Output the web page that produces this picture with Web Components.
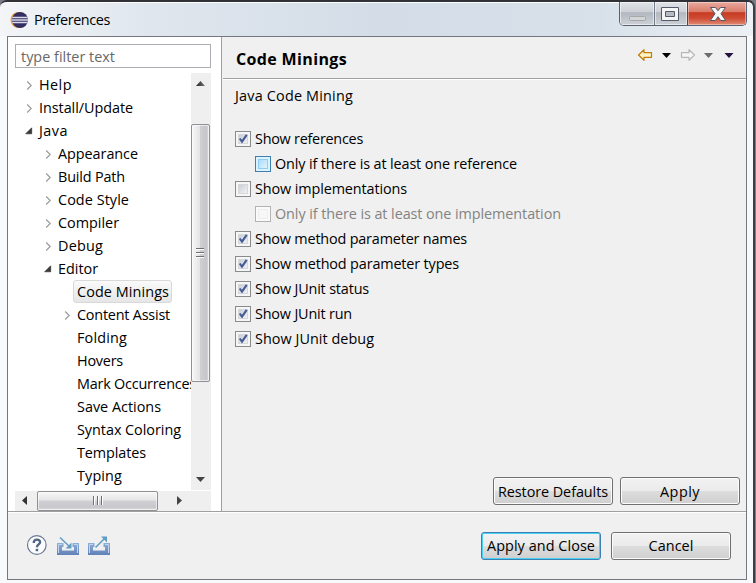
<!DOCTYPE html>
<html lang="en"><head><meta charset="utf-8"><title>Preferences</title>
<style>
html,body{margin:0;width:756px;height:583px;overflow:hidden;background:#777c86;font-family:"Open Sans","Noto Sans",sans-serif;font-size:14.4px;color:#000}
</style></head><body>
<pref-window></pref-window>
<script>
const define=(name,html,init)=>customElements.define(name,class extends HTMLElement{
  constructor(){super();const t=document.createElement('template');t.innerHTML=html;
    this.attachShadow({mode:'open'}).append(t.content.cloneNode(true));}
  connectedCallback(){if(init)init(this,this.shadowRoot);}
});

/* Single-line label; spacing is tuned so the line occupies the width in "w". */
define('fit-label',`<style>:host{display:inline-block;white-space:pre;flex:none;line-height:23px;height:23px}</style><span></span>`,(h,r)=>{
  const s=r.querySelector('span');s.textContent=h.getAttribute('text');
  const w=+h.getAttribute('w');
  if(w){s.style.letterSpacing='0px';const d=w-s.getBoundingClientRect().width;s.style.letterSpacing=(d/s.textContent.length)+'px';}
});

define('tree-item',`<style>
:host{display:flex;height:23px;align-items:center;box-sizing:border-box}
.t{width:16px;height:23px;flex:none}
.b{display:flex;height:21px;align-items:center;border:1px solid transparent;border-radius:3px;padding:0 3px;line-height:21px}
:host([selected]) .b{border-color:#d9d9d9;background:linear-gradient(#fafafa,#e6e6e6);padding-right:2px}
svg{display:block}
</style><svg class="t" viewBox="0 0 16 23"><path/></svg><div class="b"><fit-label></fit-label></div>`,(h,r)=>{
  h.style.paddingLeft=(4+19*h.getAttribute('level')) +'px';
  const p=r.querySelector('path'),s=h.getAttribute('state');
  if(s==='closed'){p.setAttribute('d','M8.2 8.5l4 4-4 4');p.setAttribute('fill','none');p.setAttribute('stroke','#989898');p.setAttribute('stroke-width','1.1');}
  if(s==='open'){p.setAttribute('d','M12.7 8.8v6H6.700z');p.setAttribute('fill','#3b3b3b');p.setAttribute('stroke','#222');p.setAttribute('stroke-width','.6');}
  const l=document.createElement('fit-label');l.setAttribute('text',h.getAttribute('text'));l.setAttribute('w',h.getAttribute('w'));
  r.querySelector('fit-label').replaceWith(l);
});

define('v-scroll',`<style>
:host{display:flex;flex-direction:column;width:20px;height:417px;background:#efefef}
svg{flex:none;display:block}
.th{margin-top:31px;height:258px;width:19px;box-sizing:border-box;border:1px solid #8f8f94;border-radius:2px;background:linear-gradient(90deg,#f7f7f7,#e4e4e6 45%,#cfcfd2 50%,#c6c6ca 85%,#e0e0e0);box-shadow:inset 0 0 0 1px #fff9;display:flex;align-items:center;justify-content:center}
.sp{flex:1}
</style><svg width="20" height="20"><defs><linearGradient id="g"><stop stop-color="#222"/><stop offset="1" stop-color="#777"/></linearGradient></defs><path d="M5 13h9l-4.500-5z" fill="url(#g)"/></svg><div class="th"><svg width="11" height="12"><path d="M1 1.500h8M1 5.500h8M1 9.500h8" stroke="#6e6e72"/><path d="M1 2.500h8M1 6.500h8M1 10.500h8" stroke="#fff"/></svg></div><div class="sp"></div><svg width="20" height="20"><path d="M5 7h9l-4.500 5z" fill="#444"/></svg>`);

define('h-scroll',`<style>
:host{display:flex;height:20px;background:#efefef;width:196px}
svg{flex:none;display:block}
.th{margin-left:2px;width:121px;height:20px;box-sizing:border-box;border:1px solid #8f8f94;border-radius:2px;background:linear-gradient(#f7f7f7,#e6e6e8 45%,#d0d0d4 50%,#c8c8cc 85%,#e0e0e0);box-shadow:inset 0 0 0 1px #fff9;display:flex;align-items:center;justify-content:center}
</style><svg width="20" height="20"><path d="M12 5v9l-5-4.500z" fill="#333"/></svg><div class="th"><svg width="12" height="10"><path d="M1.500 0v9M5.500 0v9M9.500 0v9" stroke="#6e6e72"/><path d="M2.500 0v9M6.500 0v9M10.500 0v9" stroke="#fff"/></svg></div><svg width="33" height="20"><path d="M19 5v9l5-4.500z" fill="#444"/></svg>`);

define('check-row',`<style>
:host{display:flex;height:25px;align-items:center;gap:4px}
.b{width:16px;height:16px;flex:none;box-sizing:border-box;border:1px solid #8a8b8c;background:#f6f6f6;padding:2px;display:flex}
.i{width:10px;height:10px;border:0;box-shadow:0 0 0 1px #d5d7da inset;background:linear-gradient(135deg,#c5cad3,#f6f6f6)}
svg{display:block;overflow:visible}
path{display:none}
:host([checked]) path{display:block}
:host([indent]){padding-left:20px}
:host([hot]) .b{border-color:#3c7fb1;background:#dcf2fc}
:host([hot]) .i{background:linear-gradient(135deg,#a5d9fa,#e6f6fe);box-shadow:0 0 0 1px #8fcdf3 inset}
:host([disabled]){color:#838383}
:host([disabled]) .b{border-color:#b3b3b3;background:#fafafa}
:host([disabled]) .i{background:#f7f7f7;box-shadow:0 0 0 1px #eee inset}
</style><div class="b"><div class="i"><svg width="10" height="10"><path d="M1.700 4.500L4 7.700 8.700.8" fill="none" stroke="#465c98" stroke-width="2.100"/></svg></div></div><slot></slot>`);

define('push-button',`<style>
:host{display:flex;box-sizing:border-box;width:120px;height:28px;border:1px solid #707070;border-radius:3px;box-shadow:inset 0 0 0 1px #fcfcfc;background:linear-gradient(#f2f2f2,#ebebeb 49%,#dddddd 50%,#cfcfcf);align-items:center;justify-content:center}
:host([default]){border-color:#3c7fb1;box-shadow:inset 0 0 0 1px #48d1f5}
</style><slot></slot>`);

define('title-bar',`<style>
:host{display:flex;height:34px;box-sizing:border-box;padding-left:10px;align-items:flex-start}
.logo{margin-top:9px;margin-right:5px;flex:none}
fit-label{margin-top:6px}
.sp{flex:1}
.c{display:flex;height:24px;margin-right:6px;border:1px solid #596273;border-top:0;border-radius:0 0 5px 5px;overflow:hidden;box-sizing:border-box;width:128px;flex:none}
.c div{box-shadow:inset 0 0 0 1px #ffffff8c;background:linear-gradient(#dfe2e6,#cdd1d7 44%,#b3b8c0 46%,#cdd1d7)}
.c svg{display:block}
.a{width:34px;border-right:1px solid #737b88}.m{width:32px;border-right:1px solid #5d3c40}
.c .x{flex:1;background:linear-gradient(#eaaa9e,#d97a68 44%,#c63b24 46%,#cf4a32 70%,#e08c76);box-shadow:inset 0 0 0 1px #ffffff60}
</style>
<svg class="logo" width="19" height="18" viewBox="0 0 19 18"><circle cx="8.500" cy="9" r="8" fill="#eda03b"/><circle cx="10" cy="9" r="8" fill="#332d62"/><path d="M2.300 6.500h15.400M2 9h16M2.300 11.500h15.400" stroke="#d9d9ea" stroke-width="1.300"/></svg>
<fit-label text="Preferences" w="76"></fit-label><div class="sp"></div>
<div class="c"><div class="a"><svg width="34" height="23"><rect x="9.500" y="14.500" width="16" height="4" rx="1" fill="#d3d5d7" stroke="#a4a8ad"/></svg></div>
<div class="m"><svg width="32" height="23"><path d="M6.500 5.500h17v13h-17zM10.500 9.500v5h9v-5z" fill="#f5f5f5" stroke="#535a69" fill-rule="evenodd"/></svg></div>
<div class="x"><svg width="58" height="23"><path d="M22.500 5.500h5l2.500 3.200 2.500-3.200h5L33 11.700l4.700 6.800h-5L30 14.700l-2.700 3.800h-5l4.700-6.800z" fill="#f7f7f7" stroke="#545766"/></svg></div></div>`);

define('page-header',`<style>
:host{display:flex;height:42px;box-sizing:border-box;border-bottom:1px solid #a0a0a0;box-shadow:0 1px #fff;padding-left:13px;font-size:16px;font-weight:bold;align-items:center}
.sp{flex:1}svg{flex:none;display:block}fit-label{margin-top:4px}
</style><fit-label text="Code Minings" w="111"></fit-label><div class="sp"></div>
<svg width="113" height="41" viewBox="633 37 113 41"><path d="M638.500 55l5.500-5.300v3h7.500v4.600H644v3z" fill="#fff3c6" stroke="#c07c0c" stroke-width="1.200" stroke-linejoin="round"/><path d="M662 53h9l-4.500 5z" fill="#000"/><path d="M694.500 55l-5.500-5.300v3h-7.500v4.600h7.500v3z" fill="#f7f7f7" stroke="#b7b7b7" stroke-width="1.200" stroke-linejoin="round"/><path d="M704 53h9l-4.500 5z" fill="#6c6c6c"/><path d="M724.500 53h9l-4.500 5z" fill="#26123f"/></svg>`);

define('foot-icons',`<style>:host{display:block}svg{display:block}</style>
<svg width="90" height="24" viewBox="26 534 90 24"><defs><linearGradient id="tray" x2="0" y2="1"><stop stop-color="#8eb1d7"/><stop offset="1" stop-color="#6080b8"/></linearGradient></defs>
<circle cx="36.800" cy="545" r="9.300" fill="#fcfcfd" stroke="#6b7b97" stroke-width="1.200"/>
<path d="M33.700 543c0-4.400 6.400-4.300 6.400-.8 0 2.200-3.200 2.400-3.200 5" fill="none" stroke="#4f6485" stroke-width="2.300"/><rect x="35.700" y="548.800" width="2.500" height="2.400" fill="#4f6485"/>
<path d="M57 543h6.500v4H62v3.500h12V547h-1.500v-4H79v12H57zM88 543h6.500v4H93v3.500h12V547h-1.500v-4h6.500v12H88z" fill="url(#tray)"/>
<path d="M58.500 553v-8.500h3.500M77.500 553v-8.500H74M89.500 553v-8.500H93M108.500 553v-8.500H105" fill="none" stroke="#c3d5ec"/>
<path d="M60 537.500l10 9.500M95.500 547.500l9-9" stroke="#5f9dc4" stroke-width="1.500"/><path d="M71.500 542.500v6H65.500zM101 536.500h6v6z" fill="#5f9dc4"/></svg>`);

define('pref-window',`<style>
:host{display:flex;flex-direction:column;box-sizing:border-box;width:756px;height:583px;padding:0 1px 0 0;background:#777c86}
.w{flex:1;display:flex;flex-direction:column;box-sizing:border-box;border-top:2px solid #303238;border-right:2px solid #3c3e44;border-radius:7px 7px 0 0;background:linear-gradient(90deg,#f3f5f7,#dfe6ee 20%,#d4dde7 50%,#d8e1ea 80%,#edf1f5) top/100% 34px no-repeat,#f8f9fa;box-shadow:inset 0 1px #fff}
.d{margin:0 6px 0 7px;height:544px;box-sizing:border-box;border:1px solid #74777d;background:#f0f0f0;display:flex;flex-direction:column;flex:none}
.main{display:flex;height:474px;flex:none;box-sizing:border-box}
.l{width:214px;background:#fff;border-right:1px solid #a0a0a0;box-sizing:border-box;padding:7px 0 0 7px;margin-right:1px;flex:none}
.f{width:196px;height:24px;box-sizing:border-box;border:1px solid #abadb3;color:#686868;padding-left:5px;display:flex;align-items:center;margin-bottom:5px}
.tr{display:flex;height:417px;margin-bottom:1px}.n{width:176px;overflow:hidden}
.r{flex:1;display:flex;flex-direction:column;min-width:0}
.desc{padding:5px 0 0 12px;height:41px;display:flex;box-sizing:border-box}
.k{padding:6px 0 0 12px}
.sp{flex:1}
.bt{display:flex;gap:7px;justify-content:flex-end;padding:0 6px 6px 0}
.foot{flex:1;border-top:1px solid #a0a0a0;box-shadow:inset 0 1px #fff;display:flex;align-items:center;padding:0 15px 0 18px;gap:10px}
</style>
<div class="w"><title-bar></title-bar><div class="d"><div class="main">
<div class="l"><div class="f"><fit-label text="type filter text" w="94"></fit-label></div>
<div class="tr"><div class="n">
<tree-item level="0" state="closed" text="Help" w="33"></tree-item>
<tree-item level="0" state="closed" text="Install/Update" w="94"></tree-item>
<tree-item level="0" state="open" text="Java" w="29"></tree-item>
<tree-item level="1" state="closed" text="Appearance" w="80"></tree-item>
<tree-item level="1" state="closed" text="Build Path" w="67"></tree-item>
<tree-item level="1" state="closed" text="Code Style" w="71"></tree-item>
<tree-item level="1" state="closed" text="Compiler" w="61"></tree-item>
<tree-item level="1" state="closed" text="Debug" w="45"></tree-item>
<tree-item level="1" state="open" text="Editor" w="40"></tree-item>
<tree-item level="2" selected text="Code Minings" w="92"></tree-item>
<tree-item level="2" state="closed" text="Content Assist" w="93"></tree-item>
<tree-item level="2" text="Folding" w="50"></tree-item>
<tree-item level="2" text="Hovers" w="46"></tree-item>
<tree-item level="2" text="Mark Occurrences" w="119"></tree-item>
<tree-item level="2" text="Save Actions" w="84"></tree-item>
<tree-item level="2" text="Syntax Coloring" w="104"></tree-item>
<tree-item level="2" text="Templates" w="69"></tree-item>
<tree-item level="2" text="Typing" w="45"></tree-item>
</div><v-scroll></v-scroll></div><h-scroll></h-scroll></div>
<div class="r"><page-header></page-header>
<div class="desc"><fit-label text="Java Code Mining" w="118"></fit-label></div>
<div class="k">
<check-row checked><fit-label text="Show references" w="108"></fit-label></check-row>
<check-row indent hot><fit-label text="Only if there is at least one reference" w="242"></fit-label></check-row>
<check-row><fit-label text="Show implementations" w="152"></fit-label></check-row>
<check-row indent disabled><fit-label text="Only if there is at least one implementation" w="286"></fit-label></check-row>
<check-row checked><fit-label text="Show method parameter names" w="212"></fit-label></check-row>
<check-row checked><fit-label text="Show method parameter types" w="204"></fit-label></check-row>
<check-row checked><fit-label text="Show JUnit status" w="114"></fit-label></check-row>
<check-row checked><fit-label text="Show JUnit run" w="97"></fit-label></check-row>
<check-row checked><fit-label text="Show JUnit debug" w="119"></fit-label></check-row>
</div><div class="sp"></div>
<div class="bt"><push-button><fit-label text="Restore Defaults" w="110"></fit-label></push-button><push-button><fit-label text="Apply" w="40"></fit-label></push-button></div>
</div></div>
<div class="foot"><foot-icons></foot-icons><div class="sp"></div><push-button default><fit-label text="Apply and Close" w="108"></fit-label></push-button><push-button><fit-label text="Cancel" w="45"></fit-label></push-button></div>
</div></div>`);
</script></body></html>
